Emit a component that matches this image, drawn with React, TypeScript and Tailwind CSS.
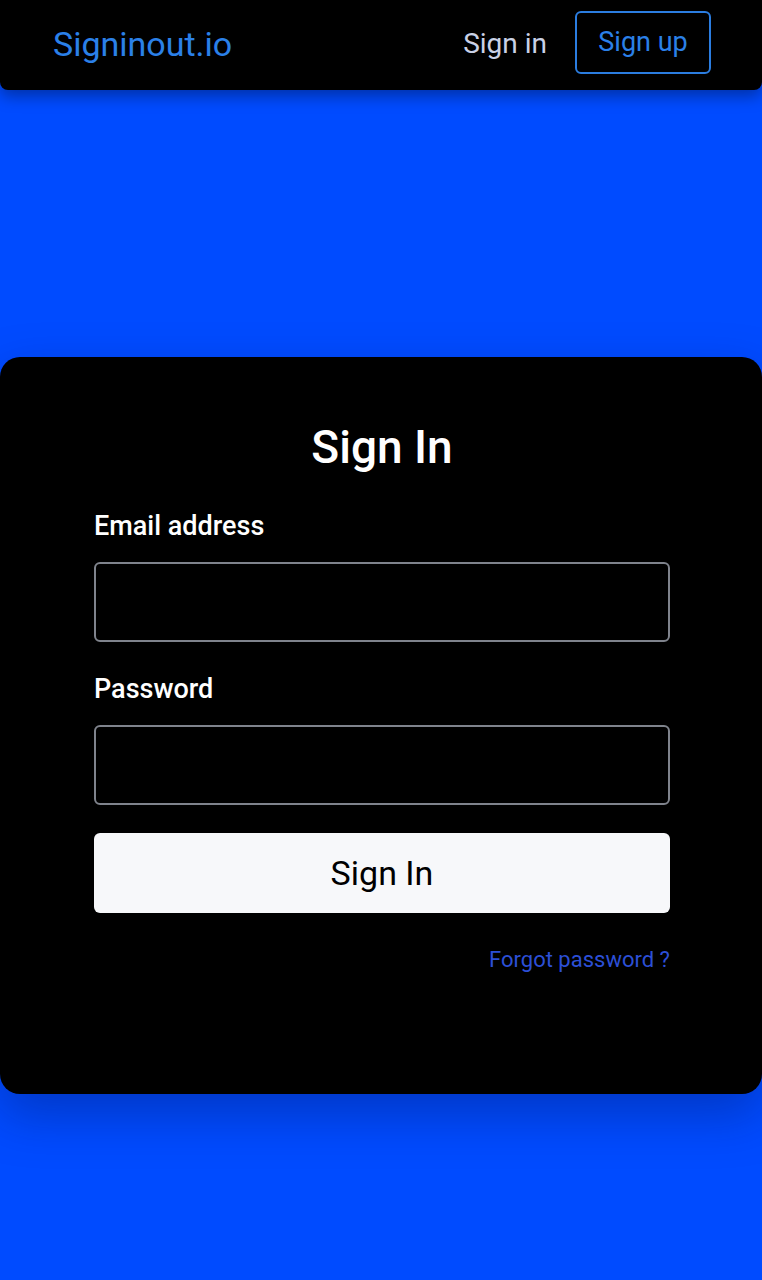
import React from "react";

export default function App() {
  return (
    <div
      className="min-h-screen bg-[#004bff] flex flex-col"
      style={{ fontFamily: "Roboto, 'Noto Sans', sans-serif" }}
    >
      <header className="h-[90px] bg-black rounded-b-[8px] shadow-[0_6px_16px_rgba(0,0,0,0.35)] flex items-center justify-between pl-[53px] pr-[51px] relative z-10">
        <div className="text-[34px] text-[#2b80e8] leading-none -mt-[2px]">Signinout.io</div>
        <div className="flex items-center gap-[28px]">
          <span className="text-[28px] text-[#c9d1e6] leading-none -mt-[2px]">Sign in</span>
          <button className="h-[63px] w-[136px] -mt-[6px] border-2 border-[#2b7de0] rounded-[6px] text-[27px] text-[#2b80e8] leading-none flex items-center justify-center">
            Sign up
          </button>
        </div>
      </header>
      <main className="pt-[267px]">
        <div className="h-[737px] bg-black rounded-[20px] shadow-[0_20px_50px_rgba(0,20,90,0.35)] pl-[94px] pr-[92px] pt-[63px]">
          <h1 className="text-center text-white text-[46px] font-medium leading-[55px]">Sign In</h1>
          <label className="block text-white text-[27px] font-medium mt-[36px] leading-[31px]">Email address</label>
          <div className="mt-[20px] h-[80px] border-2 border-[#7f838c] rounded-[6px]" />
          <label className="block text-white text-[27px] font-medium mt-[32px] leading-[31px]">Password</label>
          <div className="mt-[20px] h-[80px] border-2 border-[#7f838c] rounded-[6px]" />
          <button className="mt-[28px] w-full h-[80px] bg-[#f7f8fa] rounded-[6px] text-[34px] text-black leading-none">
            Sign In
          </button>
          <div className="mt-[36px] text-right text-[22px] text-[#2c4fd6] leading-none">Forgot password ?</div>
        </div>
      </main>
    </div>
  );
}
